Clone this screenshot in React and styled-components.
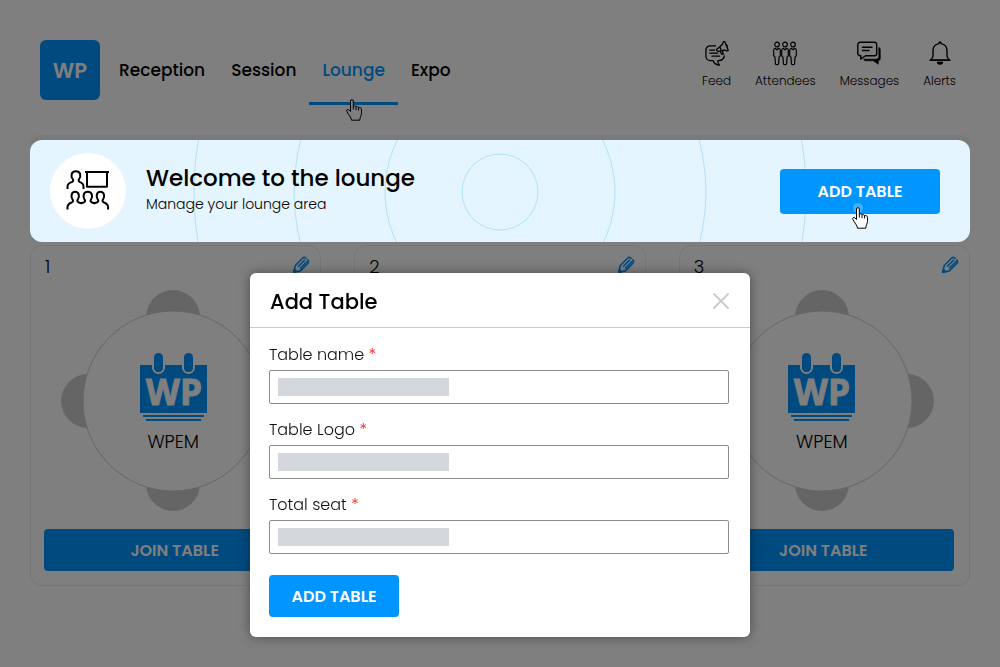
import React from "react";
import styled, { createGlobalStyle, css } from "styled-components";

const blue = "#0095ff";

const GlobalStyle = createGlobalStyle`
  * {
    box-sizing: border-box;
  }

  body {
    margin: 0;
    background: white;
    color: black;
    font-family: Poppins, Inter, sans-serif;
  }

  button, input {
    font-family: inherit;
  }
`;

const Page = styled.div`
  padding: 25px 30px 0;
`;

const Header = styled.header`
  display: flex;
  align-items: stretch;
  height: 80px;
  padding: 0 14px 0 10px;
  border-radius: 4px;
  box-shadow: 0 0 6px rgba(0, 0, 0, 0.03);
`;

const Logo = styled.a`
  display: flex;
  align-items: center;
  justify-content: center;
  align-self: center;
  width: 60px;
  height: 60px;
  margin-top: 10px;
  border-radius: 6px;
  background: ${blue};
  color: white;
  font-size: 21px;
  font-weight: 600;
  text-decoration: none;
`;

const Nav = styled.nav`
  display: flex;
  flex: 1;
  padding-left: 6px;
`;

const NavLink = styled.a`
  position: relative;
  display: flex;
  align-items: center;
  padding: 12px 13px 0;
  border-bottom: 3px solid transparent;
  color: black;
  font-size: 17px;
  font-weight: 500;
  text-decoration: none;
  ${props =>
    props.$active &&
    css`
      border-color: ${blue};
      color: ${blue};
    `};
`;

const Actions = styled.div`
  display: flex;
  gap: 24px;
  padding-top: 16px;
`;

const Action = styled.a`
  display: flex;
  flex-direction: column;
  align-items: center;
  gap: 6px;
  color: black;
  font-size: 12px;
  font-weight: 300;
  line-height: 18px;
  text-decoration: none;
`;

const BannerShell = styled.section`
  margin-top: 30px;
  padding-top: 5px;
  border-radius: 8px;
  background: #f4f4f4;
`;

const Banner = styled.div`
  position: relative;
  z-index: 2;
  display: flex;
  align-items: center;
  gap: 20px;
  height: 102px;
  padding: 0 30px 0 20px;
  border-radius: 12px;
  background: #e5f5ff;
`;

const Rings = styled.svg`
  position: absolute;
  top: 0;
  left: 0;
  width: 100%;
  height: 100%;
  fill: none;
  stroke: #b0e2fb;
`;

const BannerIcon = styled.div`
  position: relative;
  display: grid;
  place-items: center;
  width: 76px;
  height: 76px;
  border-radius: 50%;
  background: white;
`;

const BannerText = styled.div`
  position: relative;
  flex: 1;
  padding-bottom: 3px;
`;

const BannerTitle = styled.h1`
  margin: 0;
  font-size: 23px;
  font-weight: 500;
  line-height: 28px;
`;

const BannerNote = styled.p`
  margin: 0;
  font-size: 14px;
  font-weight: 300;
  line-height: 24px;
`;

const Button = styled.button`
  position: relative;
  width: ${props => props.$width};
  height: ${props => props.$height || "42px"};
  padding: 0;
  border: 0;
  border-radius: 4px;
  background: ${blue};
  color: white;
  font-size: 16px;
  font-weight: 600;
  cursor: pointer;
`;

const Pointer = styled.span`
  position: absolute;
  top: ${props => props.$top};
  left: 50%;
  margin-left: -9px;
  line-height: 0;
`;

const Tables = styled.main`
  display: grid;
  grid-template-columns: repeat(3, 1fr);
  gap: 33px;
  padding-top: 3px;
`;

const Card = styled.article`
  display: flex;
  flex-direction: column;
  padding: 0 15px 14px 13px;
  border: 1px solid #ececec;
  border-radius: 12px;
`;

const CardTop = styled.div`
  display: flex;
  justify-content: space-between;
  align-items: flex-start;
  height: 44px;
  padding-top: 10px;
`;

const Number = styled.span`
  padding-left: 1px;
  font-size: 18px;
  font-weight: 300;
  line-height: 22px;
`;

const EditButton = styled.button`
  padding: 0;
  margin-right: -5px;
  border: 0;
  background: none;
  color: ${blue};
  line-height: 0;
`;

const Seating = styled.div`
  display: grid;
  place-items: center;
  margin-bottom: 17px;
  padding-right: 3px;

  > * {
    grid-area: 1 / 1;
  }
`;

const Company = styled.div`
  display: flex;
  flex-direction: column;
  align-items: center;
  gap: 9px;
  padding-top: 3px;
  font-size: 18px;
  font-weight: 300;
  line-height: 24px;
`;

const Backdrop = styled.div`
  position: fixed;
  inset: 0;
  z-index: 1;
  background: rgba(0, 0, 0, 0.5);
`;

const ModalLayer = styled.div`
  position: fixed;
  inset: 0;
  z-index: 3;
  display: flex;
  align-items: flex-start;
  justify-content: center;
  padding-top: 273px;
  pointer-events: none;
`;

const Modal = styled.form`
  width: 50%;
  min-width: 320px;
  border-radius: 6px;
  background: white;
  box-shadow: 0 0 12px rgba(0, 0, 0, 0.4);
  pointer-events: auto;
`;

const ModalHeader = styled.div`
  display: flex;
  align-items: center;
  justify-content: space-between;
  height: 55px;
  padding: 2px 20px 0;
  border-bottom: 1px solid #ccc;
`;

const ModalTitle = styled.h2`
  margin: 0;
  font-size: 21px;
  font-weight: 500;
`;

const CloseButton = styled.button`
  padding: 0;
  border: 0;
  background: none;
  color: #ccc;
  line-height: 0;
`;

const ModalBody = styled.div`
  display: flex;
  flex-direction: column;
  align-items: flex-start;
  gap: 14px;
  padding: 15px 21px 20px 19px;
`;

const Field = styled.div`
  display: flex;
  flex-direction: column;
  gap: 3px;
  width: 100%;
`;

const Label = styled.label`
  color: #111;
  font-size: 16px;
  font-weight: 300;
  line-height: 24px;
`;

const Required = styled.span`
  color: #ff2020;
`;

const Input = styled.input`
  width: 100%;
  height: 34px;
  padding: 0 8px;
  border: 1px solid #8c8c8c;
  border-radius: 2px;
  background: linear-gradient(#d4d8dc, #d4d8dc) 8px 7px / 171px 18px no-repeat
    white;
  font-size: 16px;
`;

const Submit = styled(Button)`
  margin-top: 7px;
`;

const LineIcon = styled.svg`
  fill: none;
  stroke: currentColor;
  stroke-linejoin: round;
`;

const FeedIcon = () => (
  <LineIcon width="24" height="25" viewBox="0 0 24 25" strokeWidth="1.3">
    <path d="M11 4.8H5.2a4.3 4.3 0 0 0-4.3 4.3v6.2a4.3 4.3 0 0 0 4.3 4.3H8c1 2.600 3.500 4.500 6.500 4.600-1.400-1.300-1.800-2.800-1.600-4.600 4 .2 6.200-1.600 6.400-5.200" />
    <path d="M4.800 9.200h4.800M4.800 12.200h8M7 15.200h7.500" strokeLinecap="round" />
    <path d="M11.800 8.200l3-2.500c2-1.300 3-2.500 3.600-4.700.3-.7 1-.7 1.500-.1l3.200 8c.2.8-.4 1.200-1.100.9-2-1-3.700-1-6 0l-2 .5c-1.500.2-3.100-1-2.200-2.100z" />
    <path d="M14.800 5.800l1.500 4M15.200 10.200l1.400 3h1.700l-.8-3.600M20.500 3.600c1.500-.2 2.300 1.300 1.200 2.300" />
  </LineIcon>
);

const Attendee = ({ x }) => (
  <g transform={`translate(${x} 0)`}>
    <circle cx="4" cy="3.500" r="2.300" />
    <path d="M2.200 7.200C.9 7.600.7 8.500.7 9.600v5.200l1.300 1.400.4 6.500c.1.800.5 1 1.600 1s1.500-.2 1.600-1l.4-6.500 1.300-1.400V9.600c0-1.100-.2-2-1.500-2.400L4 8.800z" />
  </g>
);

const AttendeesIcon = () => (
  <LineIcon width="24" height="25" viewBox="0 0 24 25" strokeWidth="1.200">
    <Attendee x={0} />
    <Attendee x={8} />
    <Attendee x={16} />
  </LineIcon>
);

const MessagesIcon = () => (
  <LineIcon width="24" height="25" viewBox="0 0 24 25" strokeWidth="1.400">
    <path d="M3 1.300h14.500a2.200 2.200 0 0 1 2.200 2.200v9a2.200 2.200 0 0 1-2.200 2.200H8.500L3.800 18v-3.300H3a2.200 2.200 0 0 1-2.200-2.200v-9A2.200 2.200 0 0 1 3 1.300z" />
    <path d="M5.500 6.200h9.500M5.500 9.500h6.500" strokeLinecap="round" />
    <path
      d="M21.800 6.500c1 .3 1.500 1 1.500 2v8.800c0 1.300-.8 2.200-2 2.400v3.600l-5-3.500H9c-1.200 0-2-.6-2.400-1.600h12.200c2 0 3-1 3-3z"
      fill="currentColor"
      strokeWidth="0.600"
    />
  </LineIcon>
);

const BellIcon = () => (
  <LineIcon width="24" height="25" viewBox="0 0 24 25" strokeWidth="1.400">
    <path d="M11 2.600V2a1 1 0 0 1 2 0v.6c4 .6 6 3.400 6 7.400v5c0 1.600 1 2.400 2.500 4.100h-19C4 17.400 5 16.600 5 15v-5c0-4 2-6.800 6-7.400z" />
    <path d="M1.500 19.100h21" />
    <path d="M8.800 20.800h6.400a3.200 3 0 0 1-6.400 0z" fill="currentColor" stroke="none" />
  </LineIcon>
);

const LoungeIcon = () => (
  <LineIcon width="44" height="42" viewBox="0 0 44 42" strokeWidth="2">
    <path d="M1.500 19v-2.500c0-2.800 1.800-3.600 4.700-4.600 1.200-.5 1.300-1.900.4-3C4.900 6.700 4.700 1.300 9.900 1.300s5 5.400 3.300 7.600c-.9 1.100-.8 2.500.4 3 2.900 1 3.900 2 3.900 4.600V19" />
    <path d="M19 2h24M21 2v14.700h20V2" />
    <path d="M1.500 39.500V37c0-3 1.800-3.800 4.600-4.800 1.200-.5 1.300-1.800.4-2.900-1.700-2.200-1.500-7.500 2.700-7.500s4.400 5.300 2.700 7.500c-.9 1.100-.8 2.400.4 2.900l2.900 1 2.900-1c1.200-.5 1.300-1.800.4-2.900-1.700-2.200-1.500-7.500 3.300-7.500s5 5.300 3.300 7.500c-.9 1.100-.8 2.400.4 2.900l2.900 1 2.900-1c1.200-.5 1.300-1.800.4-2.900-1.700-2.200-1.500-7.500 2.700-7.500s4.400 5.300 2.700 7.500c-.9 1.100-.8 2.400.4 2.900 2.800 1 4.600 1.800 4.600 4.800v2.500" />
  </LineIcon>
);

const PencilIcon = () => (
  <LineIcon width="18" height="18" viewBox="0 0 18 18" strokeWidth="1.600">
    <path d="M1.500 16.500l1.800-7L10.800 2c1.500-1.100 3-.5 3.800.9M1.500 16.500l6.800-1.600 7.700-7.800c1.100-1.500.6-2.700-.7-3.600" />
    <path d="M6.500 10.300l6.200-6.300M8.500 12l6.500-6.500" strokeLinecap="round" />
    <path d="M1 17l1.300-5 3.500 3.900z" fill="currentColor" stroke="none" />
  </LineIcon>
);

const CloseIcon = () => (
  <LineIcon width="18" height="18" viewBox="0 0 18 18" strokeWidth="2">
    <path d="M2 2l14 14M16 2L2 16" strokeLinecap="round" />
  </LineIcon>
);

const Hand = () => (
  <svg width="18" height="22" viewBox="0 0 18 22" fill="white" stroke="black">
    <path d="M5.500 12.500V2c0-1.900 2.800-1.900 2.800 0v5.500c.3-1 2.500-.8 2.700.6.500-.9 2.400-.6 2.600.8.600-.8 2.700-.4 2.900 1.300v4.300c0 2-1.700 3.500-1.700 6.700H6.500c0-3-3.300-5.400-4.700-9-.6-1.800 1.200-2.200 2.200-1.100z" />
    <path d="M8.300 7.500v3M11 8.100v3M13.600 9v2.500" />
  </svg>
);

const CalendarLogo = () => (
  <svg width="67" height="69" viewBox="0 0 67 69" fill={blue}>
    <path d="M0 13h67v48H0z" />
    <g stroke="white" strokeWidth="2">
      <rect x="13" y="0" width="11" height="21" rx="5.500" />
      <rect x="43" y="0" width="11" height="21" rx="5.500" />
    </g>
    <path d="M12 0h13v12H12zM42 0h13v12H42z" fill="white" />
    <rect x="14" y="1" width="9" height="19" rx="4.500" />
    <rect x="44" y="1" width="9" height="19" rx="4.500" />
    <path d="M3 63h61v2H3zM6 67h55v2H6z" />
    <text
      x="34"
      y="53"
      fill="white"
      stroke="white"
      textAnchor="middle"
      fontFamily="Open Sans"
      fontSize="35"
      fontWeight="700"
    >
      WP
    </text>
  </svg>
);

const Chairs = () => (
  <svg width="224" height="222" viewBox="0 0 224 222">
    <g fill="#cbcbcb">
      <circle cx="112" cy="27" r="27" />
      <circle cx="112" cy="194" r="27" />
      <circle cx="27" cy="111" r="27" />
      <circle cx="197" cy="111" r="27" />
    </g>
    <circle cx="112" cy="111" r="90" fill="white" stroke="#ccc" />
  </svg>
);

const LoungeTable = ({ number }) => (
  <Card>
    <CardTop>
      <Number>{number}</Number>
      <EditButton type="button" aria-label={`Edit table ${number}`}>
        <PencilIcon />
      </EditButton>
    </CardTop>
    <Seating>
      <Chairs />
      <Company>
        <CalendarLogo />
        WPEM
      </Company>
    </Seating>
    <Button type="button" $width="100%">
      JOIN TABLE
    </Button>
  </Card>
);

const RequiredField = ({ id, label }) => (
  <Field>
    <Label htmlFor={id}>
      {label} <Required>*</Required>
    </Label>
    <Input id={id} name={id} type="text" />
  </Field>
);

const App = () => (
  <>
    <GlobalStyle />
    <Page>
      <Header>
        <Logo href="#home">WP</Logo>
        <Nav>
          <NavLink href="#reception">Reception</NavLink>
          <NavLink href="#session">Session</NavLink>
          <NavLink href="#lounge" $active>
            Lounge
            <Pointer $top="74px">
              <Hand />
            </Pointer>
          </NavLink>
          <NavLink href="#expo">Expo</NavLink>
        </Nav>
        <Actions>
          <Action href="#feed">
            <FeedIcon />
            Feed
          </Action>
          <Action href="#attendees">
            <AttendeesIcon />
            Attendees
          </Action>
          <Action href="#messages">
            <MessagesIcon />
            Messages
          </Action>
          <Action href="#alerts">
            <BellIcon />
            Alerts
          </Action>
        </Actions>
      </Header>

      <BannerShell>
        <Banner>
          <Rings>
            <circle cx="50%" cy="51%" r="38" />
            <circle cx="50%" cy="51%" r="115" />
            <circle cx="50%" cy="51%" r="206" />
            <circle cx="50%" cy="51%" r="306" />
          </Rings>
          <BannerIcon>
            <LoungeIcon />
          </BannerIcon>
          <BannerText>
            <BannerTitle>Welcome to the lounge</BannerTitle>
            <BannerNote>Manage your lounge area</BannerNote>
          </BannerText>
          <Button type="button" $width="160px" $height="45px">
            ADD TABLE
            <Pointer $top="34px">
              <svg width="18" height="26" viewBox="0 0 18 26">
                <circle cx="7" cy="5" r="5" fill="#40afff" />
                <g transform="translate(0 4)">
                  <Hand />
                </g>
              </svg>
            </Pointer>
          </Button>
        </Banner>
      </BannerShell>

      <Tables>
        <LoungeTable number={1} />
        <LoungeTable number={2} />
        <LoungeTable number={3} />
      </Tables>
    </Page>

    <Backdrop />
    <ModalLayer>
      <Modal role="dialog" aria-labelledby="modal-title">
        <ModalHeader>
          <ModalTitle id="modal-title">Add Table</ModalTitle>
          <CloseButton type="button" aria-label="Close">
            <CloseIcon />
          </CloseButton>
        </ModalHeader>
        <ModalBody>
          <RequiredField id="table-name" label="Table name" />
          <RequiredField id="table-logo" label="Table Logo" />
          <RequiredField id="total-seat" label="Total seat" />
          <Submit type="button" $width="130px">
            ADD TABLE
          </Submit>
        </ModalBody>
      </Modal>
    </ModalLayer>
  </>
);

export default App;
